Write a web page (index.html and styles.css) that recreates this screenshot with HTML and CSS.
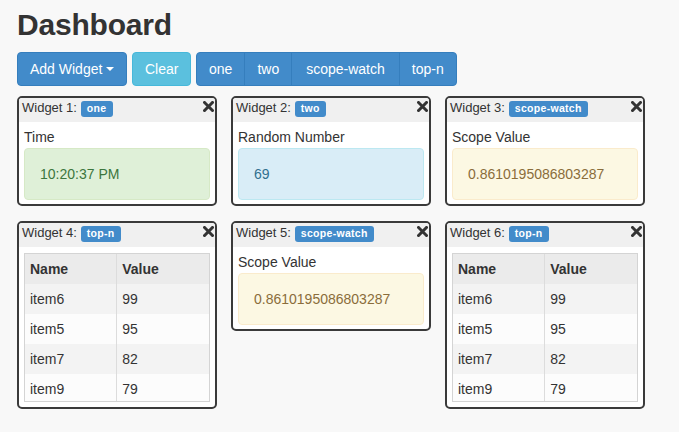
FILE: index.html
```html
<!DOCTYPE html>
<html>
<head>
<meta charset="utf-8">
<title>Dashboard</title>
<link rel="stylesheet" href="styles.css">
</head>
<body>
<div class="page">
  <h2 class="title">Dashboard</h2>
  <div class="toolbar">
    <button class="btn btn-primary">Add Widget<span class="caret"></span></button>
    <button class="btn btn-info">Clear</button>
    <div class="btn-group">
      <button class="btn btn-primary">one</button>
      <button class="btn btn-primary">two</button>
      <button class="btn btn-primary btn-wide">scope-watch</button>
      <button class="btn btn-primary">top-n</button>
    </div>
  </div>

  <div class="widgets">
    <div class="widget">
      <div class="widget-head">
        <span class="widget-title">Widget 1: <span class="label">one</span></span>
        <svg class="close" width="11" height="11" viewBox="0 0 11 11"><path d="M1.5 1.5 L9.5 9.5 M9.5 1.5 L1.5 9.5" stroke="#333" stroke-width="3" stroke-linecap="square"/></svg>
      </div>
      <div class="widget-body">
        <div class="field-label">Time</div>
        <div class="alert alert-success">10:20:37 PM</div>
      </div>
    </div>

    <div class="widget">
      <div class="widget-head">
        <span class="widget-title">Widget 2: <span class="label">two</span></span>
        <svg class="close" width="11" height="11" viewBox="0 0 11 11"><path d="M1.5 1.5 L9.5 9.5 M9.5 1.5 L1.5 9.5" stroke="#333" stroke-width="3" stroke-linecap="square"/></svg>
      </div>
      <div class="widget-body">
        <div class="field-label">Random Number</div>
        <div class="alert alert-info">69</div>
      </div>
    </div>

    <div class="widget">
      <div class="widget-head">
        <span class="widget-title">Widget 3: <span class="label">scope-watch</span></span>
        <svg class="close" width="11" height="11" viewBox="0 0 11 11"><path d="M1.5 1.5 L9.5 9.5 M9.5 1.5 L1.5 9.5" stroke="#333" stroke-width="3" stroke-linecap="square"/></svg>
      </div>
      <div class="widget-body">
        <div class="field-label">Scope Value</div>
        <div class="alert alert-warning">0.8610195086803287</div>
      </div>
    </div>

    <div class="widget">
      <div class="widget-head">
        <span class="widget-title">Widget 4: <span class="label">top-n</span></span>
        <svg class="close" width="11" height="11" viewBox="0 0 11 11"><path d="M1.5 1.5 L9.5 9.5 M9.5 1.5 L1.5 9.5" stroke="#333" stroke-width="3" stroke-linecap="square"/></svg>
      </div>
      <div class="widget-body table-body">
        <div class="table-wrap">
          <table class="table">
            <thead><tr><th>Name</th><th>Value</th></tr></thead>
            <tbody>
              <tr><td>item6</td><td>99</td></tr>
              <tr><td>item5</td><td>95</td></tr>
              <tr><td>item7</td><td>82</td></tr>
              <tr><td>item9</td><td>79</td></tr>
            </tbody>
          </table>
        </div>
      </div>
    </div>

    <div class="widget">
      <div class="widget-head">
        <span class="widget-title">Widget 5: <span class="label">scope-watch</span></span>
        <svg class="close" width="11" height="11" viewBox="0 0 11 11"><path d="M1.5 1.5 L9.5 9.5 M9.5 1.5 L1.5 9.5" stroke="#333" stroke-width="3" stroke-linecap="square"/></svg>
      </div>
      <div class="widget-body">
        <div class="field-label">Scope Value</div>
        <div class="alert alert-warning">0.8610195086803287</div>
      </div>
    </div>

    <div class="widget">
      <div class="widget-head">
        <span class="widget-title">Widget 6: <span class="label">top-n</span></span>
        <svg class="close" width="11" height="11" viewBox="0 0 11 11"><path d="M1.5 1.5 L9.5 9.5 M9.5 1.5 L1.5 9.5" stroke="#333" stroke-width="3" stroke-linecap="square"/></svg>
      </div>
      <div class="widget-body table-body">
        <div class="table-wrap">
          <table class="table">
            <thead><tr><th>Name</th><th>Value</th></tr></thead>
            <tbody>
              <tr><td>item6</td><td>99</td></tr>
              <tr><td>item5</td><td>95</td></tr>
              <tr><td>item7</td><td>82</td></tr>
              <tr><td>item9</td><td>79</td></tr>
            </tbody>
          </table>
        </div>
      </div>
    </div>
  </div>
</div>
</body>
</html>
```
FILE: styles.css
```css
* { box-sizing: border-box; }

body {
  margin: 0;
  background: #f8f8f8;
  color: #333;
  font-family: "Liberation Sans", Arial, Helvetica, sans-serif;
  font-size: 14px;
  line-height: 20px;
}

.page {
  padding: 8px 17px 0 17px;
}

.title {
  margin: 0 0 11px 0;
  font-size: 30px;
  line-height: 33px;
  font-weight: bold;
  letter-spacing: -0.2px;
  color: #333;
}

.toolbar {
  display: flex;
  gap: 4.6px;
  margin-bottom: 10px;
}

.btn {
  font-family: inherit;
  font-size: 14px;
  line-height: 20px;
  padding: 6px 12px;
  border: 1px solid transparent;
  border-radius: 4px;
  color: #fff;
  cursor: pointer;
  display: inline-flex;
  align-items: center;
}

.btn-primary {
  background: #428bca;
  border-color: #357ebd;
}

.btn-info {
  background: #5bc0de;
  border-color: #46b8da;
}

.caret {
  display: inline-block;
  width: 0;
  height: 0;
  margin-left: 4px;
  border-top: 4px solid #fff;
  border-left: 4px solid transparent;
  border-right: 4px solid transparent;
}

.btn-group {
  display: flex;
}

.btn-group .btn {
  border-radius: 0;
}

.btn-group .btn + .btn {
  margin-left: -1px;
}

.btn-group .btn:first-child {
  border-radius: 4px 0 0 4px;
}

.btn-group .btn:last-child {
  border-radius: 0 4px 4px 0;
}

.btn-wide {
  padding-left: 14px;
  padding-right: 14px;
}

.widgets {
  display: flex;
  flex-wrap: wrap;
  align-items: flex-start;
  column-gap: 14.5px;
  row-gap: 15px;
  width: 640px;
}

.widget {
  width: 199.5px;
  background: #fff;
  border: 2px solid #3a3a3a;
  border-radius: 5px;
  overflow: hidden;
}

.widget-head {
  display: flex;
  justify-content: space-between;
  align-items: flex-start;
  height: 24px;
  padding: 0 1px 0 3px;
  background: #f0f0f0;
  font-size: 13px;
  line-height: 20px;
}

.close {
  margin-top: 3px;
  flex: none;
}

.label {
  display: inline-block;
  font-size: 10.5px;
  font-weight: bold;
  line-height: 1;
  letter-spacing: 0.3px;
  padding: 2.1px 6.3px 3.2px;
  border-radius: 3px;
  background: #428bca;
  color: #fff;
  vertical-align: baseline;
}

.widget-body {
  padding: 5px 5px 4px 5px;
}

.field-label {
  line-height: 20px;
  margin-bottom: 1px;
}

.alert {
  padding: 15px;
  border: 1px solid transparent;
  border-radius: 4px;
  line-height: 20px;
}

.alert-success {
  background: #dff0d8;
  border-color: #d6e9c6;
  color: #3c763d;
}

.alert-info {
  background: #d9edf7;
  border-color: #bce8f1;
  color: #31708f;
}

.alert-warning {
  background: #fcf8e3;
  border-color: #faebcc;
  color: #8a6d3b;
}

.table-body {
  padding: 6px 5px 5px 5px;
}

.table-wrap {
  height: 149px;
  border: 1px solid #d4d4d4;
  overflow: hidden;
}

.table {
  width: 100%;
  border-collapse: collapse;
}

.table th,
.table td {
  padding: 5px;
  line-height: 20px;
  text-align: left;
  width: 50%;
}

.table th:first-child,
.table td:first-child {
  border-right: 1px solid #dcdcdc;
}

.table thead tr {
  background: #ebebeb;
}

.table th {
  font-weight: bold;
}

.table tbody tr:nth-child(odd) {
  background: #f3f3f3;
}

.table tbody tr:nth-child(even) {
  background: #fcfcfc;
}
```
